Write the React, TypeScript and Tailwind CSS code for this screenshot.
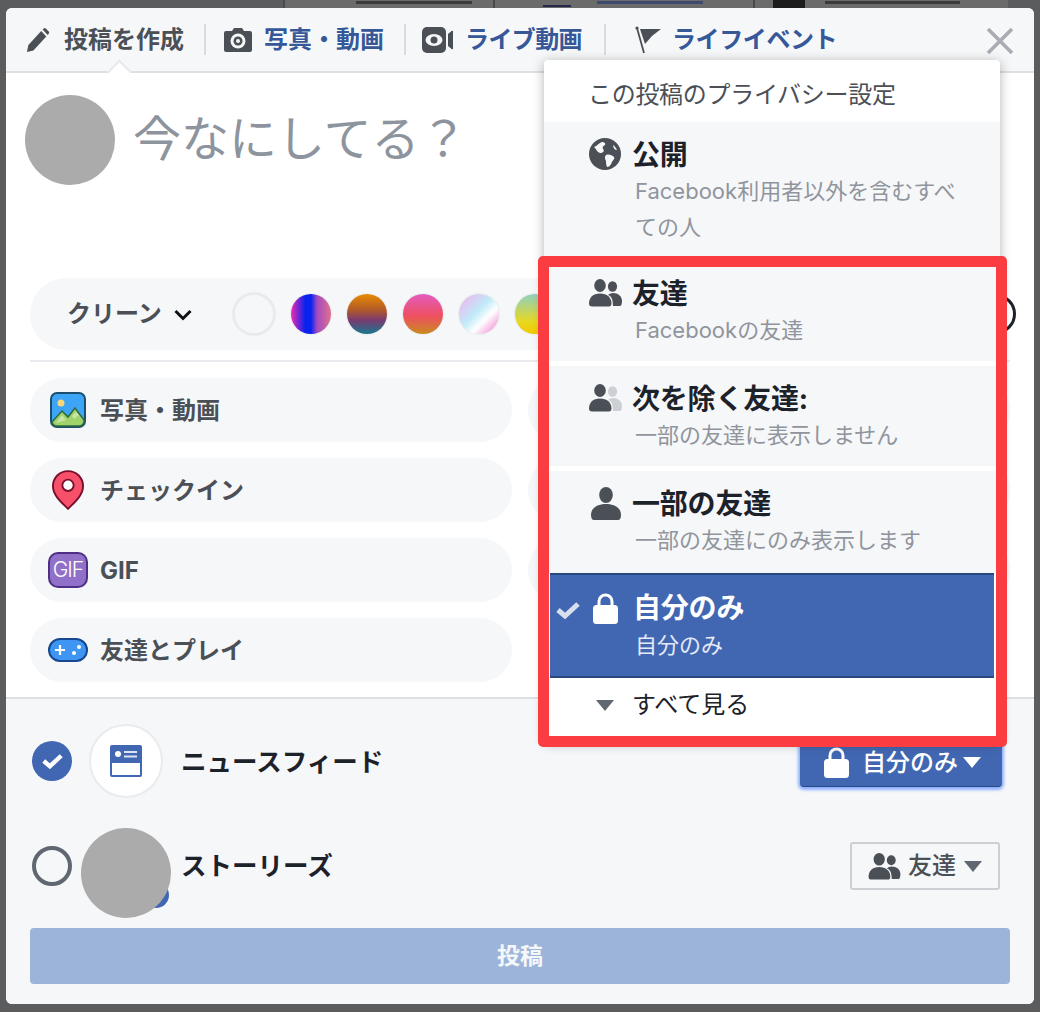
import React from "react";

const FONT = "font-['Inter','Noto_Sans_CJK_JP',sans-serif]";

function Pencil() {
  return (
    <svg width="24" height="26" viewBox="0 0 26 26" className="shrink-0" preserveAspectRatio="none">
      <path d="M1 25l1.6-7L16.5 4l5.5 5.5L8 23.5z" fill="#4b4f56" />
      <path d="M18 2.6l1.2-1.2a1.6 1.6 0 0 1 2.2 0l3.2 3.2a1.6 1.6 0 0 1 0 2.2l-1.2 1.2z" fill="#4b4f56" />
    </svg>
  );
}
function Camera() {
  return (
    <svg width="28" height="25" viewBox="0 0 28 25" className="shrink-0">
      <path d="M2 4h6l2-3h8l2 3h6a2 2 0 0 1 2 2v17a2 2 0 0 1-2 2H2a2 2 0 0 1-2-2V6a2 2 0 0 1 2-2z" fill="#4b4f56" />
      <circle cx="14" cy="14" r="7.5" fill="#f5f7f9" />
      <circle cx="14" cy="14" r="4.5" fill="#4b4f56" />
      <circle cx="14" cy="14" r="2" fill="#f5f7f9" />
    </svg>
  );
}
function Video() {
  return (
    <svg width="31" height="26" viewBox="0 0 31 26" className="shrink-0">
      <rect x="0" y="0" width="24" height="26" rx="5" fill="#4b4f56" />
      <path d="M26 7l3-2.5a1 1 0 0 1 2 .5v16a1 1 0 0 1-2 .5L26 19z" fill="#4b4f56" />
      <ellipse cx="12" cy="13" rx="8.5" ry="6" fill="#f5f7f9" />
      <circle cx="12" cy="13" r="3.5" fill="#4b4f56" />
    </svg>
  );
}
function Flag() {
  return (
    <svg width="26" height="28" viewBox="0 0 26 28" className="shrink-0">
      <path d="M2 2l7 25" stroke="#4b4f56" strokeWidth="1.8" fill="none" />
      <circle cx="2" cy="2" r="1.6" fill="#4b4f56" />
      <path d="M5 3h21l-9 7-7 8z" fill="#4b4f56" />
    </svg>
  );
}
function Close() {
  return (
    <svg width="28" height="28" viewBox="0 0 28 28">
      <path d="M2 2l24 24M26 2L2 26" stroke="#a9adb3" strokeWidth="3.6" />
    </svg>
  );
}
function Chevron() {
  return (
    <svg width="18" height="12" viewBox="0 0 18 12">
      <path d="M1.500 2l7.500 7.500L16.500 2" stroke="#111" strokeWidth="3" fill="none" />
    </svg>
  );
}
function Globe() {
  return (
    <svg width="32" height="32" viewBox="0 0 32 32" className="shrink-0">
      <circle cx="16" cy="16" r="16" fill="#4b4f56" />
      <path d="M5 9c3-1 5-4 8-5 2 0 4 1 3 3-2 1-3 2-2 4 2 2 0 4-3 4-3-1-3-3-6-6zM17 17c3-1 6 0 8 2 1 2-1 3-2 5-1 3-3 5-5 5-1-2-1-4-1-6-1-2-2-4 0-6zM24 7c2 1 3 3 4 5-2 0-4-2-4-5z" fill="#f5f7f9" />
    </svg>
  );
}
function Friends({ muted = false, w = 33, h = 28 }: { muted?: boolean; w?: number; h?: number }) {
  const c = muted ? "#ccd0d5" : "#4b4f56";
  return (
    <svg width={w} height={h} viewBox="0 0 33 28" className="shrink-0">
      <ellipse cx="23.5" cy="7.5" rx="4.6" ry="5.2" fill={c} />
      <path d="M24 14c5 0 9 3 9 8 0 3-1 5-2 5h-7c0-5-1-10-5-11 1-1 3-2 5-2z" fill={c} />
      <ellipse cx="11" cy="6.5" rx="5.8" ry="6.5" fill="#4b4f56" />
      <path d="M11 14.500c7 0 11.500 4 11.500 10 0 2-1 3-2.500 3H3c-2 0-3-1-3-3 0-6 4-10 11-10z" fill="#4b4f56" />
    </svg>
  );
}
function Person() {
  return (
    <svg width="30" height="33" viewBox="0 0 30 33" className="shrink-0">
      <ellipse cx="15" cy="8" rx="6.800" ry="8" fill="#4b4f56" />
      <path d="M15 17c9 0 15 4 15 11 0 3-1 5-3 5H3c-2 0-3-2-3-5 0-7 6-11 15-11z" fill="#4b4f56" />
    </svg>
  );
}
function Lock({ className = "" }: { className?: string }) {
  return (
    <svg width="25" height="31" viewBox="0 0 25 31" className={"shrink-0 " + className}>
      <path d="M6 14V8.500a6.500 6.500 0 0 1 13 0V14" stroke="#fff" strokeWidth="3" fill="none" />
      <rect x="0" y="12" width="25" height="19" rx="3.500" fill="#fff" />
    </svg>
  );
}
function Caret({ color }: { color: string }) {
  return (
    <svg width="18" height="11" viewBox="0 0 18 11" className="shrink-0">
      <path d="M0 0h18l-9 11z" fill={color} />
    </svg>
  );
}
function PhotoIcon() {
  return (
    <svg width="36" height="36" viewBox="0 0 36 36" className="shrink-0">
      <rect x="1" y="1" width="34" height="34" rx="6" fill="#3ea4f6" stroke="#1c4f6e" strokeWidth="2" />
      <circle cx="11" cy="11" r="3.500" fill="#f6d77b" />
      <path d="M2 30l10-11 6 6 7-9 9 12v2a5 5 0 0 1-5 4H7a5 5 0 0 1-5-4z" fill="#9fd46d" stroke="#2e6a3e" strokeWidth="1.500" />
      <path d="M6 31l6-8 4 5z M22 24l4-4 3 3-5 4z" fill="#c8e4a6" />
    </svg>
  );
}
function PinIcon() {
  return (
    <svg width="32" height="40" viewBox="0 0 34 42" className="shrink-0">
      <path d="M17 1C8 1 1 8 1 17c0 10 10 18 16 24 6-6 16-14 16-24C33 8 26 1 17 1z" fill="#f7506a" stroke="#7a0f2c" strokeWidth="2" />
      <circle cx="17" cy="16" r="6" fill="#fff" stroke="#7a0f2c" strokeWidth="2" />
    </svg>
  );
}
function GameIcon() {
  return (
    <svg width="40" height="24" viewBox="0 0 40 24" className="shrink-0">
      <rect x="1" y="1" width="38" height="22" rx="11" fill="#3e96f2" stroke="#16488f" strokeWidth="2" />
      <path d="M12 7v10M7 12h10" stroke="#fff" strokeWidth="2.200" />
      <circle cx="26" cy="15" r="2" fill="#fff" />
      <circle cx="31" cy="9" r="2" fill="#fff" />
    </svg>
  );
}
function FeedIcon() {
  return (
    <svg width="32" height="32" viewBox="0 0 32 32">
      <rect x="0" y="0" width="32" height="32" rx="2" fill="#4267b2" />
      <rect x="2" y="18" width="28" height="12" fill="#fff" />
      <circle cx="8" cy="9" r="3" fill="#fff" />
      <path d="M14 7h13M14 11.500h13" stroke="#dce4f3" strokeWidth="2" />
    </svg>
  );
}
function CheckMark({ color, w = 24, h = 18 }: { color: string; w?: number; h?: number }) {
  return (
    <svg width={w} height={h} viewBox="0 0 24 18" className="shrink-0">
      <path d="M2 9l7 6L22 3" stroke={color} strokeWidth="5" fill="none" />
    </svg>
  );
}

function TabSep() {
  return <div className="w-[2px] h-[31px] bg-[#d8dbdf] shrink-0" />;
}

function Pill({ icon, label }: { icon: React.ReactNode; label: string }) {
  return (
    <div className="h-[64px] rounded-[32px] bg-[#f5f7f9] flex items-center">
      <div className="w-[70px] pl-[6px] flex items-center justify-center shrink-0">{icon}</div>
      <span className="text-[24px] font-bold text-[#4b4f56] leading-none mt-[2px]">{label}</span>
    </div>
  );
}

function Swatch({ className }: { className: string }) {
  return <div className={"w-[40px] h-[40px] rounded-full shrink-0 shadow-[0_0_2px_rgba(0,0,0,0.15)] " + className} />;
}

function MenuRow({
  icon,
  title,
  sub,
  className = "",
}: {
  icon: React.ReactNode;
  title: string;
  sub: string[];
  className?: string;
}) {
  return (
    <div className={"bg-[#f5f7f9] pl-[45px] pr-[36px] pt-[17px] " + className}>
      <div className="flex items-center h-[32px]">
        <div className="w-[44px] shrink-0 flex items-center -mt-[2px]">{icon}</div>
        <span className="text-[28px] font-bold text-[#1d2129] leading-none -ml-[1px] tracking-[-0.2px]">{title}</span>
      </div>
      <div className="pl-[46px] mt-[2px] text-[22px] text-[#90949c] leading-[36px]">
        {sub.map((s) => (
          <div key={s}>{s}</div>
        ))}
      </div>
    </div>
  );
}

export default function App() {
  return (
    <div className={"w-[1040px] h-[1012px] bg-[#5b5c5e] overflow-hidden " + FONT}>
      {/* page behind the modal: only unreadable bottom edges of its tabs show */}
      <div className="h-[8px] flex overflow-hidden">
        <div className="w-[283px] shrink-0" />
        <div className="w-[210px] shrink-0 bg-[#6b6b6b] border-l-2 border-[#4a4a4a] pl-[71px] pt-[1px]">
          <div className="w-[116px] h-[3px] bg-[#3a3a3a]" />
        </div>
        <div className="w-[260px] shrink-0 bg-[#6b6b6b] border-l-2 border-[#4a4a4a] flex">
          <div className="ml-[48px] mt-[5px] w-[28px] h-[2px] bg-[#24264a] shrink-0" />
          <div className="ml-[26px] mt-[1px] w-[106px] h-[3px] bg-[#3c4a70] shrink-0" />
        </div>
        <div className="w-[255px] shrink-0 bg-[#6b6b6b] border-l-2 border-[#4a4a4a] flex">
          <div className="ml-[18px] w-[32px] bg-[#1c1c1c] shrink-0" />
          <div className="ml-[20px] mt-[1px] w-[135px] h-[3px] bg-[#3a3a3a] shrink-0" />
        </div>
      </div>

      <div className="relative ml-[6px] w-[1028px] h-[996px] rounded-[6px] bg-white flex flex-col overflow-hidden">
        {/* header tabs */}
        <div className="relative h-[65px] shrink-0 bg-[#f5f7f9] border-b-2 border-[#dddfe2] flex items-center pl-[20px]">
          <div className="flex items-center gap-[14px] pr-[20px]">
            <Pencil />
            <span className="text-[24px] font-bold text-[#4b4f56] leading-none">投稿を作成</span>
          </div>
          <TabSep />
          <div className="flex items-center gap-[12px] pl-[18px] pr-[20px]">
            <Camera />
            <span className="text-[24px] font-bold text-[#365899] leading-none">写真・動画</span>
          </div>
          <TabSep />
          <div className="flex items-center gap-[12px] pl-[16px] pr-[22px]">
            <Video />
            <span className="text-[24px] font-bold text-[#365899] leading-none tracking-[-0.6px]">ライブ動画</span>
          </div>
          <TabSep />
          <div className="flex items-center gap-[11px] pl-[29px]">
            <Flag />
            <span className="text-[24px] font-bold text-[#365899] leading-none tracking-[-0.4px]">ライフイベント</span>
          </div>
          <div className="ml-auto mr-[20px] mt-[2px]">
            <Close />
          </div>
          <div className="absolute left-[105px] bottom-[-9px] w-[17px] h-[17px] rotate-45 bg-white border-l-2 border-t-2 border-[#e6e8eb]" />
        </div>

        {/* composer */}
        <div className="h-[205px] shrink-0 flex items-start pt-[22px] pl-[19px]">
          <div className="w-[90px] h-[90px] rounded-full bg-[#ababab] shrink-0" />
          <div className="ml-[18px] mt-[12px] text-[48px] leading-[64px] text-[#8d949e]">今なにしてる？</div>
        </div>

        {/* background picker */}
        <div className="ml-[24px] h-[72px] shrink-0 rounded-[36px] bg-[#f5f7f9] flex items-center pl-[37px] w-[976px]">
          <span className="text-[24px] font-bold text-[#4b4f56] leading-none">クリーン</span>
          <span className="ml-[12px] mt-[2px]">
            <Chevron />
          </span>
          <div className="ml-[41px] flex items-center gap-[16px]">
            <Swatch className="bg-[#f5f7f9] !w-[42px] !h-[42px] border-2 border-[#e9ebee]" />
            <Swatch className="bg-[linear-gradient(90deg,#f12bb0_0%,#0a22f0_35%,#0a22f0_50%,#a24bc0_65%,#e0708f_100%)]" />
            <Swatch className="bg-[linear-gradient(180deg,#e88a00_0%,#b05a2a_40%,#7a3a70_65%,#18788f_100%)]" />
            <Swatch className="bg-[linear-gradient(180deg,#e45bc0_0%,#ee5060_55%,#c98a20_100%)]" />
            <Swatch className="bg-[linear-gradient(135deg,#f5b0ee_0%,#c0eaf8_45%,#ffffff_65%,#f5b0e0_85%,#90b0e8_100%)]" />
            <Swatch className="bg-[linear-gradient(180deg,#8fd0c0_0%,#e8d820_70%,#f0c800_100%)]" />
          </div>
          <div className="ml-auto -mr-[10px] w-[40px] h-[40px] rounded-full border-[3px] border-[#1d2129] shrink-0" />
        </div>

        <div className="mx-[24px] mt-[10px] h-[2px] bg-[#e9ebee] shrink-0" />

        {/* action pills */}
        <div className="mx-[24px] mt-[16px] grid grid-cols-2 gap-x-[16px] gap-y-[16px] shrink-0">
          <Pill icon={<PhotoIcon />} label="写真・動画" />
          <div className="h-[64px] rounded-[32px] bg-[#f5f7f9]" />
          <Pill icon={<PinIcon />} label="チェックイン" />
          <div className="h-[64px] rounded-[32px] bg-[#f5f7f9]" />
          <Pill
            icon={
              <div className="w-[40px] h-[36px] rounded-[10px] bg-[#9170c9] border-2 border-[#4e2f86] text-white text-[21px] font-light leading-[32px] text-center tracking-[-1px]">
                GIF
              </div>
            }
            label="GIF"
          />
          <div className="h-[64px] rounded-[32px] bg-[#f5f7f9]" />
          <Pill icon={<GameIcon />} label="友達とプレイ" />
        </div>

        {/* footer */}
        <div className="mt-[15px] flex-1 bg-[#f5f7f9] border-t-2 border-[#dddfe2] px-[24px] flex flex-col">
          <div className="mt-[25px] h-[74px] flex items-center">
            <div className="w-[40px] h-[40px] ml-[2px] rounded-full bg-[#4267b2] flex items-center justify-center shrink-0">
              <CheckMark color="#fff" w={21} h={16} />
            </div>
            <div className="ml-[17px] w-[74px] h-[74px] rounded-full bg-white border-2 border-[#e9ebee] flex items-center justify-center shrink-0">
              <FeedIcon />
            </div>
            <span className="ml-[18px] mt-[2px] text-[25.5px] font-bold text-[#1d2129] leading-none">ニュースフィード</span>
            <div className="ml-auto mr-[8px] mt-[4px] w-[202px] h-[48px] rounded-[4px] bg-[#4267b2] border-b border-[#29487d] shadow-[0_1px_3px_2px_#8fb0ff] flex items-center pl-[24px]">
              <Lock />
              <span className="ml-[13px] text-[24px] font-medium text-white leading-none">自分のみ</span>
              <span className="ml-[5px]">
                <Caret color="#fff" />
              </span>
            </div>
          </div>
          <div className="mt-[30px] h-[90px] flex items-center">
            <div className="w-[40px] h-[40px] ml-[2px] -mt-[14px] rounded-full border-[4px] border-[#606770] shrink-0" />
            <div className="relative ml-[9px] w-[90px] h-[90px] shrink-0">
              <div className="absolute right-[2px] bottom-[10px] w-[26px] h-[26px] rounded-full bg-[#4267b2]" />
              <div className="absolute inset-0 rounded-full bg-[#ababab]" />
            </div>
            <span className="ml-[10px] -mt-[14px] text-[25.5px] font-bold text-[#1d2129] leading-none">ストーリーズ</span>
            <div className="ml-auto mr-[10px] -mt-[14px] w-[150px] h-[48px] rounded-[3px] border-2 border-[#ccd0d5] bg-[#f5f7f9] flex items-center pl-[16px]">
              <Friends w={33} h={27} />
              <span className="ml-[7px] text-[24px] font-medium text-[#4b4f56] leading-none">友達</span>
              <span className="ml-[8px]">
                <Caret color="#606770" />
              </span>
            </div>
          </div>
          <div className="mt-[10px] h-[56px] rounded-[4px] bg-[#9cb4d8] flex items-center justify-center">
            <span className="text-[23px] font-bold text-white/90 leading-none">投稿</span>
          </div>
        </div>

        {/* privacy dropdown */}
        <div className="absolute left-[538px] top-[52px] w-[456px] h-[682px] bg-white rounded-[4px] shadow-[0_2px_12px_rgba(0,0,0,0.3)] overflow-hidden">
          <div className="h-[62px] pl-[44px] flex items-center text-[24px] text-[#4b4f56] leading-none tracking-[-0.3px] pt-[8px]">
            この投稿のプライバシー設定
          </div>
          <MenuRow className="h-[139px]" icon={<Globe />} title="公開" sub={["Facebook利用者以外を含むすべ", "ての人"]} />
          <MenuRow className="h-[100px]" icon={<Friends />} title="友達" sub={["Facebookの友達"]} />
          <div className="h-[5px]" />
          <MenuRow className="h-[100px]" icon={<Friends muted />} title="次を除く友達:" sub={["一部の友達に表示しません"]} />
          <div className="h-[5px]" />
          <MenuRow className="h-[102px]" icon={<div className="pl-[2px]"><Person /></div>} title="一部の友達" sub={["一部の友達にのみ表示します"]} />
          <div className="mx-[6px] h-[105px] bg-[#4267b2] border-y-2 border-[#29487d] relative">
            <div className="absolute left-[6px] top-[26px]">
              <CheckMark color="#d8dfef" />
            </div>
            <div className="pl-[43px] pt-[17px] flex items-center h-[49px]">
              <Lock />
              <span className="ml-[15px] text-[28px] font-bold text-white leading-none tracking-[-0.2px]">自分のみ</span>
            </div>
            <div className="pl-[85px] mt-[3px] text-[22px] text-[#e4eaf6] leading-[36px]">自分のみ</div>
          </div>
          <div className="h-[54px] pl-[52px] flex items-center">
            <Caret color="#606770" />
            <span className="ml-[18px] text-[24px] text-[#1d2129] leading-none">すべて見る</span>
          </div>
        </div>

        {/* annotation frame */}
        <div className="absolute left-[532px] top-[248px] w-[469px] h-[491px] rounded-[5px] border-[11px] border-[#fb3c40] pointer-events-none" />
      </div>
    </div>
  );
}
